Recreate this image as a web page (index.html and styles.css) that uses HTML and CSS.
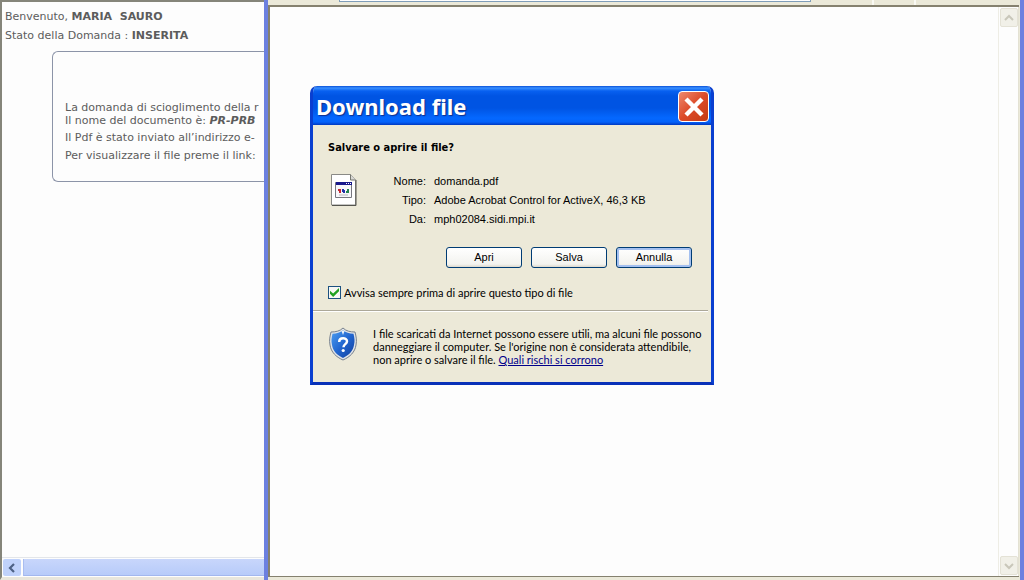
FILE: index.html
```html
<!DOCTYPE html>
<html lang="it">
<head>
<meta charset="utf-8">
<title>Download file</title>
<link rel="stylesheet" href="styles.css">
</head>
<body>
<div class="desktop">
  <main class="page">
    <div class="page-body">
      <p class="status">Benvenuto, <b>MARIA&nbsp; SAURO</b></p>
      <p class="status">Stato della Domanda : <b>INSERITA</b></p>
      <section class="card">
        <p>La domanda di scioglimento della r</p>
        <p>Il nome del documento è: <b><i>PR-PRB</i></b></p>
        <p class="spaced">Il Pdf è stato inviato all’indirizzo e-</p>
        <p class="spaced">Per visualizzare il file preme il link:</p>
      </section>
    </div>
    <div class="hscroll">
      <button class="hscroll-arrow" aria-label="Scorri a sinistra">
        <svg width="8" height="10" viewBox="0 0 8 10"><path d="M6 1L2 5l4 4" fill="none" stroke="#4d6185" stroke-width="2.2"/></svg>
      </button>
      <div class="hscroll-thumb"></div>
    </div>
  </main>
  <section class="browser">
    <div class="toolbar"><input class="address" type="text" aria-label="Indirizzo"><span class="divider"></span><span class="divider"></span></div>
    <div class="viewport">
      <div class="blank"></div>
      <div class="vscroll">
        <button class="vscroll-arrow" aria-label="Scorri in alto"><svg width="10" height="8" viewBox="0 0 10 8"><path d="M1 6l4-4 4 4" fill="none" stroke="#c9c7ba" stroke-width="2"/></svg></button>
        <button class="vscroll-arrow" aria-label="Scorri in basso"><svg width="10" height="8" viewBox="0 0 10 8"><path d="M1 2l4 4 4-4" fill="none" stroke="#c9c7ba" stroke-width="2"/></svg></button>
      </div>
    </div>
  </section>

  <div class="dialog" role="dialog" aria-labelledby="dialog-title">
    <header class="titlebar">
      <h1 id="dialog-title">Download file</h1>
      <button class="close" aria-label="Chiudi"><svg width="22" height="22" viewBox="0 0 22 22"><path d="M3 3l16 16M19 3L3 19" stroke="#fff" stroke-width="4.4"/></svg></button>
    </header>
    <div class="dialog-main">
      <h2>Salvare o aprire il file?</h2>
      <div class="file">
        <svg width="28" height="34" viewBox="0 0 28 34">
          <path d="M1.500 1.500h19l5 5.500v25h-24z" fill="#fff" stroke="#8a8a86"/>
          <path d="M26 7v25.500H2" fill="none" stroke="#55554f"/>
          <path d="M20.500 1.500V7h5" fill="#d8d8d4" stroke="#77776f"/>
          <path d="M5.500 9.500h16v15h-16z" fill="#f7f7fa" stroke="#77777f"/>
          <path d="M6 9h16v3H6z" fill="#18188c"/>
          <path d="M16 10h1v1h-1zM18 10h1v1h-1zM20 10h1v1h-1z" fill="#fff"/>
          <path d="M8 16h3v4H9v-2H8z" fill="#c52a32"/>
          <path d="M12 16h2v1h1v3h-2v-1h-1z" fill="#2230a8"/>
          <path d="M17 16h2v4h-3v-2h1z" fill="#238452"/>
          <path d="M9 22h9" stroke="#b8b8bc"/>
        </svg>
        <dl class="details">
          <dt>Nome:</dt><dd>domanda.pdf</dd>
          <dt>Tipo:</dt><dd>Adobe Acrobat Control for ActiveX, 46,3 KB</dd>
          <dt>Da:</dt><dd>mph02084.sidi.mpi.it</dd>
        </dl>
      </div>
      <div class="actions">
        <button class="btn">Apri</button>
        <button class="btn">Salva</button>
        <button class="btn btn-default">Annulla</button>
      </div>
      <label class="ask"><input type="checkbox" checked>Avvisa sempre prima di aprire questo tipo di file</label>
    </div>
    <footer class="warning">
      <svg width="28" height="34" viewBox="0 0 28 34">
        <defs><linearGradient id="shield" x1="0" y1="0" x2="1" y2="1"><stop offset="0" stop-color="#4c9df0"/><stop offset=".5" stop-color="#2266d0"/><stop offset="1" stop-color="#123f9c"/></linearGradient></defs>
        <path d="M14 1c3 3 7 4 12 4 1 4 2 8 1 13-1 7-6 12-13 15C7 30 2 25 1 18 0 13 1 9 2 5c5 0 9-1 12-4z" fill="#dfe3e8" stroke="#77808c"/>
        <path d="M14 3.500c3 2 6 3 10.500 3.300C25.500 11 26 14 25 18c-1 6-5 10-11 13C8 28 4 24 3 18 2 14 2.500 11 3.500 6.800 8 6.500 11 5.500 14 3.500z" fill="url(#shield)"/>
        <path d="M12.500 4h3L14 8z" fill="#eef4fa"/>
        <path d="M10.200 15c0-5 7.800-4.500 7.800-.8 0 3-3.500 2.800-3.500 6" fill="none" stroke="#fff" stroke-width="2.500"/>
        <circle cx="14.200" cy="23.500" r="1.600" fill="#fff"/>
      </svg>
      <p>I file scaricati da Internet possono essere utili, ma alcuni file possono<br>danneggiare il computer. Se l'origine non è considerata attendibile,<br>non aprire o salvare il file. <a href="#rischi">Quali rischi si corrono</a></p>
    </footer>
  </div>
</div>
</body>
</html>
```

FILE: styles.css
```css
* { box-sizing: border-box; }
body { margin: 0; }
p, h1, h2, dl, dd { margin: 0; }
button { padding: 0; font: inherit; }
svg { display: block; flex: none; }

.desktop {
  position: relative;
  display: flex;
  height: 100vh;
  overflow: hidden;
  background: #fdfdfd;
}

.page {
  flex: none;
  display: flex;
  flex-direction: column;
  width: 264px;
  overflow: hidden;
  border-top: 2px solid #85857a;
  border-left: 2px solid #85857a;
  border-bottom: 3px solid #e8e6dc;
  color: #5c5c5c;
  font: 11px/18px "DejaVu Sans", sans-serif;
  white-space: nowrap;
}
.page-body { flex: 1; padding: 5px 0 0 3px; }
.status { line-height: 19px; }
.card {
  margin: 6px 0 0 47px;
  padding: 49px 0 16px 12px;
  border: 1px solid #8c94a8;
  border-right: 0;
  border-radius: 6px 0 0 6px;
  line-height: 13px;
}
.card .spaced { line-height: 18px; }
.card .spaced:nth-child(3) { margin-top: 2px; }

.hscroll {
  display: flex;
  gap: 2px;
  height: 20px;
  padding: 1px 0 1px 1px;
  border-top: 1px solid #e3e6ea;
}
.hscroll-arrow {
  display: grid;
  place-items: center;
  width: 18px;
  border: 0;
  border-radius: 2px;
  background: #c0d2fb;
}
.hscroll-thumb {
  flex: 1;
  border-left: 1px solid #a9bdf0;
  border-bottom: 1px solid #a2b7ee;
  background: linear-gradient(#c8d6fb, #b7cbf9);
}

.browser {
  flex: 1;
  display: flex;
  flex-direction: column;
  min-width: 0;
  border-left: 4px solid #6c80e0;
  border-right: 4px solid #6c80e0;
  background: #ebe9d9;
}
.toolbar { display: flex; height: 5px; padding-left: 71px; }
.address {
  width: 472px;
  height: 2px;
  margin-right: 61px;
  padding: 0;
  border: 1px solid #7f9db9;
  border-top: 0;
  background: #fff;
}
.divider { width: 2px; height: 5px; margin-right: 40px; background: #fafaf4; }
.viewport {
  flex: 1;
  display: flex;
  margin: 0 1px 3px 0;
  border: solid #85816f;
  border-width: 2px 0 1px 2px;
  background: #fdfdfd;
}
.blank { flex: 1; }
.vscroll {
  display: flex;
  flex-direction: column;
  justify-content: space-between;
  width: 21px;
  padding: 1px;
  border-left: 1px solid #eeede5;
  border-right: 1px solid #e3e1d3;
}
.vscroll-arrow {
  display: grid;
  place-items: center;
  width: 18px;
  height: 19px;
  border: 1px solid #e4e2d6;
  border-radius: 2px;
  background: #f1f0e8;
}

.dialog {
  position: absolute;
  top: 86px;
  left: 310px;
  width: 404px;
  overflow: hidden;
  border-radius: 7px 7px 0 0;
  border: 3px solid #0a3fd0;
  border-top: 0;
  border-bottom-color: #0831b8;
  background: #ece9d8;
  color: #000;
  font: 11px/13px "Liberation Sans", sans-serif;
}
.titlebar {
  display: flex;
  align-items: center;
  justify-content: space-between;
  height: 39px;
  margin: 0 -3px;
  padding: 2px 5px 0 6px;
  background: linear-gradient(#0a50d8 0, #3a90ff 2px, #0860f0 5px, #0054e3 10px, #0054e3 22px, #0468ff 32px, #0462fa 36px, #0038c0 39px);
}
.titlebar h1 {
  padding-bottom: 2px;
  color: #fff;
  font: bold 22px/28px "Noto Sans", sans-serif;
  text-shadow: 1px 1px 1px #10308c;
}
.close {
  display: grid;
  place-items: center;
  width: 31px;
  height: 31px;
  border: 1px solid #fff;
  border-radius: 4px;
  background: linear-gradient(135deg, #ee8a70, #dc4a28 50%, #c43c14);
}
.dialog-main { padding: 16px 19px 11px 15px; border-bottom: 1px solid #aca899; margin-right: 3px; }
.dialog-main h2 { font: bold 11px/13px "DejaVu Sans Condensed", "Open Sans", sans-serif; }
.file { display: flex; gap: 34px; padding: 18px 0 0 2px; }
.file > svg { margin-top: 1px; }
.details {
  display: grid;
  grid-template-columns: 34px 1fr;
  column-gap: 8px;
  line-height: 19px;
  white-space: nowrap;
}
.details dt { text-align: right; }
.actions { display: flex; justify-content: flex-end; gap: 9px; margin: 18px -3px 0 0; }
.btn {
  width: 77px;
  height: 21px;
  border: 1px solid #003c74;
  border-radius: 3px;
  background: linear-gradient(#fff, #f3f3ef 85%, #dcd8cc);
  color: #000;
}
.actions .btn { width: 76px; }
.btn-default { box-shadow: inset 0 0 0 2px #a4c0f0; }
.ask {
  display: flex;
  align-items: center;
  gap: 3px;
  margin-top: 18px;
  font-family: Lato, sans-serif;
}
.ask input {
  appearance: none;
  width: 13px;
  height: 13px;
  margin: 0;
  border: 1px solid #1c5180;
  background: #f7f7f4;
}
.ask input:checked::before {
  content: "";
  display: block;
  width: 9px;
  height: 9px;
  margin: 1px;
  background: #21a121;
  clip-path: polygon(0 30%, 35% 60%, 100% 0, 100% 35%, 35% 100%, 0 65%);
}
.warning {
  display: flex;
  gap: 16px;
  margin-right: 3px;
  padding: 15px 0 16px 16px;
  border-top: 1px solid #fff;
  font-family: Lato, sans-serif;
  white-space: nowrap;
}
.warning a { color: #00008b; }
```
